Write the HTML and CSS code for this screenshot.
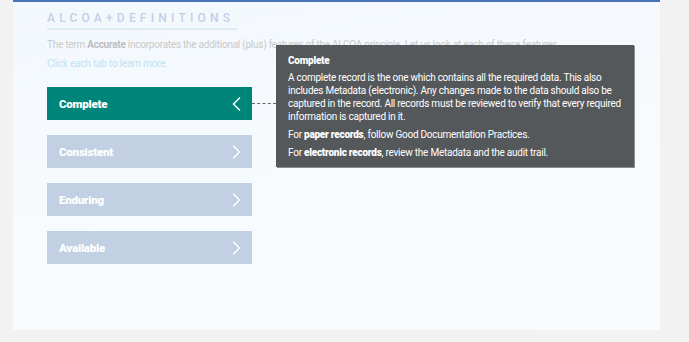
FILE: index.html
```html
<!DOCTYPE html>
<html lang="en">
<head>
    <meta charset="UTF-8">
    <meta name="viewport" content="width=device-width, initial-scale=1.0">
    <title>ALCOA+ Definitions</title>
    <link rel="stylesheet" href="styles.css">
</head>
<body>
    <div class="card">
        <h2 class="title">ALCOA+DEFINITIONS</h2>
        <p class="intro">The term <b>Accurate</b> incorporates the additional (plus) features of the ALCOA principle. Let us look at each of these features.</p>
        <p class="hint">Click each tab to learn more.</p>

        <div class="tabs">
            <div class="tab active">
                <span>Complete</span>
                <svg class="chev" width="9" height="14" viewBox="0 0 9 14"><polyline points="8,0.5 1.5,7 8,13.5" fill="none" stroke="#fff" stroke-width="1.4"/></svg>
            </div>
            <div class="tab">
                <span>Consistent</span>
                <svg class="chev" width="9" height="14" viewBox="0 0 9 14"><polyline points="1,0.5 7.5,7 1,13.5" fill="none" stroke="#fff" stroke-width="1.4"/></svg>
            </div>
            <div class="tab">
                <span>Enduring</span>
                <svg class="chev" width="9" height="14" viewBox="0 0 9 14"><polyline points="1,0.5 7.5,7 1,13.5" fill="none" stroke="#fff" stroke-width="1.4"/></svg>
            </div>
            <div class="tab">
                <span>Available</span>
                <svg class="chev" width="9" height="14" viewBox="0 0 9 14"><polyline points="1,0.5 7.5,7 1,13.5" fill="none" stroke="#fff" stroke-width="1.4"/></svg>
            </div>

            <div class="connector"></div>
            <div class="popup">
                <h3>Complete</h3>
                <p>A complete record is the one which contains all the required data. This also includes Metadata (electronic). Any changes made to the data should also be captured in the record. All records must be reviewed to verify that every required information is captured in it.</p>
                <p>For <b>paper records</b>, follow Good Documentation Practices.</p>
                <p>For <b>electronic records</b>, review the Metadata and the audit trail.</p>
            </div>
        </div>
    </div>
</body>
</html>
```

FILE: styles.css
```css
body {
    margin: 0;
    background-color: #f2f2f2;
    font-family: 'Roboto', 'Liberation Sans', sans-serif;
    height: 342px;
    overflow: hidden;
}

.card {
    margin-left: 13px;
    width: 647px;
    height: 330px;
    box-sizing: border-box;
    border-top: 2px solid #4a72b8;
    background: linear-gradient(170deg, #f3f8fd 0%, #f7fbfe 60%, #f9fcfd 100%);
    padding: 5px 34px 0;
}

.title {
    margin: 0;
    display: inline-block;
    font-size: 12px;
    font-weight: 500;
    letter-spacing: 4.2px;
    color: #c6cee6;
    padding-bottom: 3px;
    border-bottom: 2px solid #dcecf6;
    padding-right: 3px;
}

.intro {
    margin: 9px 0 0;
    font-size: 10px;
    letter-spacing: -0.25px;
    color: #c9c9c9;
}

.intro b {
    color: #bdbdbd;
}

.hint {
    margin: 8px 0 0;
    font-size: 10px;
    letter-spacing: -0.2px;
    color: #bde2f3;
}

.tabs {
    position: relative;
    margin-top: 18px;
    display: flex;
    flex-direction: column;
    gap: 15px;
}

.tab {
    width: 205px;
    height: 33px;
    box-sizing: border-box;
    display: flex;
    align-items: center;
    justify-content: space-between;
    padding: 0 11px 0 12px;
    background-color: #c2d0e3;
    color: #fff;
    font-size: 11.5px;
    font-weight: 900;
    letter-spacing: -0.2px;
}

.tab.active {
    background-color: #00857a;
}

.connector {
    position: absolute;
    left: 205px;
    top: 16px;
    width: 24px;
    border-top: 1px dashed #6a6a6a;
}

.popup {
    position: absolute;
    left: 229px;
    top: -42px;
    width: 358px;
    box-sizing: border-box;
    background-color: #55585b;
    box-shadow: 1px 1px 0 #8a8d90;
    color: #fff;
    padding: 9px 12px 8px;
    font-size: 10px;
    line-height: 13px;
    letter-spacing: -0.25px;
}

.popup h3 {
    margin: 0 0 4px;
    font-size: 10px;
    font-weight: 900;
}

.popup p {
    margin: 0 0 5px;
}

.popup p:last-child {
    margin-bottom: 0;
}

.popup b {
    font-weight: 900;
}
```
